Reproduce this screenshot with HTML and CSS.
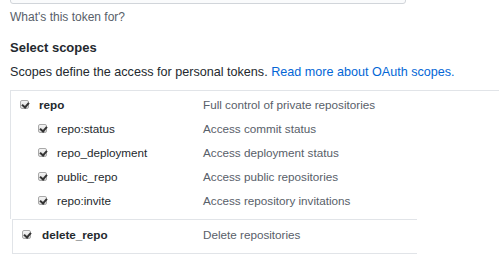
FILE: index.html
```html
<!DOCTYPE html>
<html lang="en">
<head>
    <meta charset="UTF-8">
    <title>New personal access token</title>
    <link rel="stylesheet" href="styles.css">
</head>
<body>
    <div class="token-form">
        <div class="note-input"></div>
        <p class="note">What's this token for?</p>

        <h3 class="scopes-title">Select scopes</h3>
        <p class="scopes-help">Scopes define the access for personal tokens. <a href="#">Read more about OAuth scopes.</a></p>

        <div class="scope-group wide">
            <div class="scope-row">
                <span class="check"></span>
                <span class="scope-name parent">repo</span>
                <span class="scope-desc">Full control of private repositories</span>
            </div>
            <div class="scope-row child">
                <span class="check"></span>
                <span class="scope-name">repo:status</span>
                <span class="scope-desc">Access commit status</span>
            </div>
            <div class="scope-row child">
                <span class="check"></span>
                <span class="scope-name">repo_deployment</span>
                <span class="scope-desc">Access deployment status</span>
            </div>
            <div class="scope-row child">
                <span class="check"></span>
                <span class="scope-name">public_repo</span>
                <span class="scope-desc">Access public repositories</span>
            </div>
            <div class="scope-row child">
                <span class="check"></span>
                <span class="scope-name">repo:invite</span>
                <span class="scope-desc">Access repository invitations</span>
            </div>
        </div>

        <div class="scope-group single">
            <div class="scope-row">
                <span class="check"></span>
                <span class="scope-name parent">delete_repo</span>
                <span class="scope-desc">Delete repositories</span>
            </div>
        </div>
    </div>
</body>
</html>
```

FILE: styles.css
```css
* {
    margin: 0;
    padding: 0;
    box-sizing: border-box;
}

body {
    font-family: "Liberation Sans", Arial, sans-serif;
    color: #24292e;
    background-color: #fff;
    overflow: hidden;
}

.token-form {
    padding-left: 10px;
}

.note-input {
    width: 396px;
    height: 30px;
    margin-top: -26px;
    border: 1px solid #d1d5da;
    border-radius: 3px;
    background-color: #fafbfc;
}

.note {
    margin-top: 6px;
    font-size: 12px;
    line-height: 14px;
    color: #586069;
}

.scopes-title {
    margin-top: 16px;
    font-size: 13px;
    line-height: 16px;
    font-weight: bold;
}

.scopes-help {
    margin-top: 8px;
    font-size: 12.6px;
    line-height: 16px;
}

.scopes-help a {
    color: #0366d6;
    text-decoration: none;
}

.scope-group {
    border-top: 1px solid #e1e4e8;
    border-left: 1px solid #e1e4e8;
}

.scope-group.wide {
    margin-top: 10px;
    padding: 2px 0 7px;
}

.scope-group.single {
    margin-left: 2px;
    width: 405px;
    border-bottom: 1px solid #e1e4e8;
    padding: 3px 0 6px;
}

.scope-row {
    display: flex;
    align-items: center;
    height: 23.8px;
    padding-left: 9px;
}

.single .scope-row {
    height: 24px;
}

.scope-row.child {
    padding-left: 27px;
}

.check {
    width: 9px;
    height: 9px;
    border: 1px solid #a9a9a9;
    border-radius: 2px;
    background: linear-gradient(#f4f4f4, #dcdcdc);
    position: relative;
    flex-shrink: 0;
}

.check::after {
    content: "";
    position: absolute;
    left: 2px;
    top: 0;
    width: 3px;
    height: 5px;
    border-right: 2px solid #333;
    border-bottom: 2px solid #333;
    transform: rotate(40deg);
}

.scope-name {
    margin-left: 10px;
    width: 164px;
    font-size: 11.7px;
    color: #24292e;
}

.scope-row.child .scope-name {
    width: 146px;
}

.scope-name.parent {
    font-weight: bold;
}

.single .scope-name {
    margin-left: 11px;
    width: 161px;
}

.scope-desc {
    font-size: 11.7px;
    color: #586069;
}
```
